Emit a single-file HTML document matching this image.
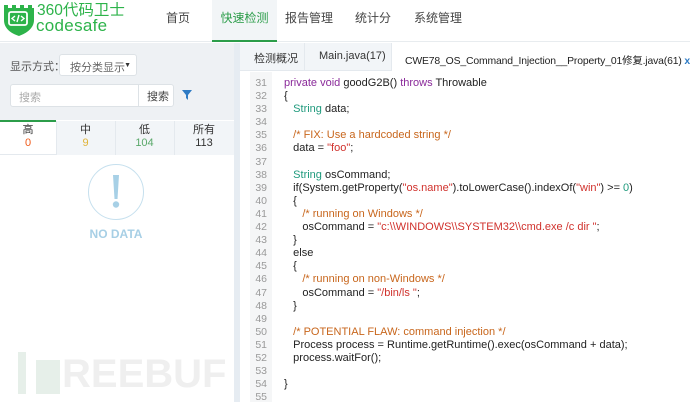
<!DOCTYPE html>
<html><head><meta charset="utf-8"><style>
*{margin:0;padding:0;box-sizing:border-box}
body{width:690px;height:402px;overflow:hidden;background:#fff;font-family:"Liberation Sans","Noto Sans CJK SC",sans-serif;position:relative;font-size:12px;color:#333}
.abs{position:absolute}
.nav{left:0;top:0;width:690px;height:42px;background:#fff;border-bottom:1px solid #e8ecef}
.ni{top:0;height:42px;line-height:36px;font-size:12px;color:#444;text-align:center}
.left{left:0;top:43px;width:234px;height:359px;background:#fff}
.sep{left:234px;top:43px;width:6px;height:359px;background:#e6ecf2}
.code{font-size:11px;line-height:13.1px;white-space:pre;color:#222}
.kw{color:#8a2a9a}.ty{color:#1f9a7d}.cm{color:#c8661c}.st{color:#d0312c}.nu{color:#1f9a7d}
.gut{color:#999;text-align:right}
</style></head><body>
<div class="abs nav"></div>
<svg class="abs" style="left:2px;top:2px" width="34" height="34" viewBox="0 0 34 34"><path d="M2 3h4v3h4V3h4v3h4V3h4v3h4V3h4v3h2v12c0 8-7 13-15 16C8 31 2 26 2 18z" fill="#2db34a"/><rect x="7" y="10" width="18" height="13" rx="2" fill="none" stroke="#fff" stroke-width="1.8"/><path d="M13 14l-3 2.5 3 2.5M19 14l3 2.5-3 2.5M17 13l-2 7" stroke="#fff" stroke-width="1.4" fill="none"/></svg>
<div class="abs" style="left:37px;top:2px;font-size:15.5px;line-height:17px;color:#2db34a">360代码卫士</div>
<div class="abs" style="left:36px;top:17px;font-size:17px;line-height:18px;color:#2db34a;letter-spacing:0.3px">codesafe</div>
<div class="abs ni" style="left:160px;width:36px">首页</div>
<div class="abs ni" style="left:212px;width:65px;background:#f2f5f7;color:#2c9d4a;border-bottom:2px solid #2c9d4a;height:42px">快速检测</div>
<div class="abs ni" style="left:284px;width:50px">报告管理</div>
<div class="abs ni" style="left:350px;width:46px">统计分析</div>
<div class="abs ni" style="left:414px;width:48px">系统管理</div>

<div class="abs left"></div>
<div class="abs" style="left:0;top:43px;width:234px;height:77px;background:#eef1f4"></div>
<div class="abs" style="left:10px;top:58px;font-size:11px;color:#555">显示方式：</div>
<div class="abs" style="left:59px;top:54px;width:78px;height:22px;background:#fff;border:1px solid #dde2e6;border-radius:3px;font-size:11px;color:#666;padding:4px 0 0 10px;white-space:nowrap">按分类显示<span style="font-size:7px;position:absolute;right:5px;top:7px;color:#333">▼</span></div>
<div class="abs" style="left:10px;top:84px;width:164px;height:23px;background:#fff;border:1px solid #dde2e6;border-radius:3px"></div>
<div class="abs" style="left:19px;top:89px;font-size:11px;color:#aaa">搜索</div>
<div class="abs" style="left:138px;top:84px;width:36px;height:23px;border-left:1px solid #dde2e6;font-size:11px;color:#444;padding:4px 0 0 8px">搜索</div>
<svg class="abs" style="left:182px;top:90px" width="10" height="10"><path d="M0 0h10L6 5v5L4 8V5z" fill="#2e7bc4"/></svg>
<div class="abs" style="left:0;top:120px;width:234px;height:35px;border-bottom:1px solid #e4e9ee"></div>
<div class="abs" style="left:56px;top:121px;width:178px;height:34px;background:#f2f5f8;border-left:1px solid #e4e9ee"></div>
<div class="abs" style="left:0;top:120px;width:56px;height:2px;background:#2c9d4a"></div>
<div class="abs" style="left:115px;top:121px;width:1px;height:34px;background:#e4e9ee"></div>
<div class="abs" style="left:174px;top:121px;width:1px;height:34px;background:#e4e9ee"></div>
<div class="abs" style="left:0;top:124px;width:56px;text-align:center;font-size:11px;line-height:13px">高<br><span style="color:#f05a1a">0</span></div>
<div class="abs" style="left:56px;top:124px;width:59px;text-align:center;font-size:11px;line-height:13px">中<br><span style="color:#e0b43a">9</span></div>
<div class="abs" style="left:115px;top:124px;width:59px;text-align:center;font-size:11px;line-height:13px">低<br><span style="color:#5aa86a">104</span></div>
<div class="abs" style="left:174px;top:124px;width:60px;text-align:center;font-size:11px;line-height:13px">所有<br>113</div>
<svg class="abs" style="left:87px;top:163px" width="58" height="58"><circle cx="29" cy="29" r="27.5" fill="none" stroke="#c6e0ee" stroke-width="1"/><path d="M26 12h6l-1.5 24h-3z" fill="#a7d0e6"/><circle cx="29" cy="41.5" r="3.2" fill="#a7d0e6"/></svg>
<div class="abs" style="left:80px;top:227px;width:72px;text-align:center;font-size:12px;font-weight:bold;color:#a7cfe5">NO DATA</div>
<div class="abs" style="left:18px;top:352px;width:8px;height:42px;background:#e6efe9"></div>
<div class="abs" style="left:36px;top:360px;width:24px;height:34px;background:#e6efe9"></div>
<div class="abs" style="left:62px;top:352px;font-size:40px;line-height:44px;font-weight:bold;color:#efefef">REEBUF</div>

<div class="abs sep"></div>
<div class="abs" style="left:240px;top:43px;width:450px;height:28px;background:#f2f5f8;border-bottom:1px solid #e4e9ee"></div>
<div class="abs" style="left:240px;top:43px;width:64px;height:28px;font-size:11px;color:#333;padding:7px 0 0 14px">检测概况</div>
<div class="abs" style="left:304px;top:43px;width:88px;height:28px;border-left:1px solid #e4e9ee;border-right:1px solid #e4e9ee;font-size:11px;color:#333;padding:7px 0 0 14px">Main.java(17)</div>
<div class="abs" style="left:392px;top:43px;width:298px;height:29px;background:#fff;font-size:10.4px;letter-spacing:-0.15px;color:#222;padding:9px 0 0 13px;white-space:nowrap">CWE78_OS_Command_Injection__Property_01修复.java(61) <span style="color:#2e7bc4;font-weight:bold">x</span></div>
<div class="abs" style="left:250px;top:72px;width:22px;height:330px;background:#f5f6f7"></div>
<div class="abs code gut" style="left:250px;top:77px;width:17px;font-size:10.5px">31
32
33
34
35
36
37
38
39
40
41
42
43
44
45
46
47
48
49
50
51
52
53
54
55</div>
<div class="abs code" style="left:284px;top:77px"><span class="kw">private void</span> goodG2B() <span class="kw">throws</span> Throwable
{
   <span class="ty">String</span> data;

   <span class="cm">/* FIX: Use a hardcoded string */</span>
   data = <span class="st">"foo"</span>;

   <span class="ty">String</span> osCommand;
   if(System.getProperty(<span class="st">"os.name"</span>).toLowerCase().indexOf(<span class="st">"win"</span>) &gt;= <span class="nu">0</span>)
   {
      <span class="cm">/* running on Windows */</span>
      osCommand = <span class="st">"c:\\WINDOWS\\SYSTEM32\\cmd.exe /c dir "</span>;
   }
   else
   {
      <span class="cm">/* running on non-Windows */</span>
      osCommand = <span class="st">"/bin/ls "</span>;
   }

   <span class="cm">/* POTENTIAL FLAW: command injection */</span>
   Process process = Runtime.getRuntime().exec(osCommand + data);
   process.waitFor();

}
</div>
</body></html>
